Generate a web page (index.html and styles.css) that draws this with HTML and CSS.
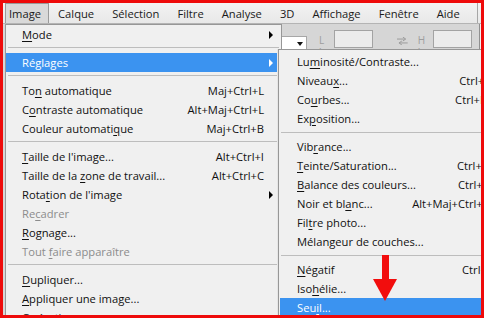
FILE: index.html
```html
<!DOCTYPE html>
<html lang="fr">
<head>
    <meta charset="UTF-8">
    <title>Image - Réglages</title>
    <link rel="stylesheet" href="styles.css">
</head>
<body>
<div class="frame">
    <div class="menubar">
        <span class="menubar-item active">Image</span>
        <span class="menubar-item">Calque</span>
        <span class="menubar-item">Sélection</span>
        <span class="menubar-item">Filtre</span>
        <span class="menubar-item">Analyse</span>
        <span class="menubar-item">3D</span>
        <span class="menubar-item">Affichage</span>
        <span class="menubar-item">Fenêtre</span>
        <span class="menubar-item">Aide</span>
        <span class="menubar-sep"></span>
    </div>

    <div class="toolbar">
        <span class="tb-select"><span class="tb-caret"></span></span>
        <span class="tb-label">L :</span>
        <span class="tb-input"></span>
        <svg class="tb-swap" width="11" height="8" viewBox="0 0 11 8">
            <path d="M0 2h8M6 0l3 2-3 2M11 6H3M5 4L2 6l3 2" fill="none" stroke="#9a9a9a" stroke-width="1"/>
        </svg>
        <span class="tb-label tb-label-h">H :</span>
        <span class="tb-input tb-input-h"></span>
        <span class="tb-vline"></span>
    </div>

    <div class="menu main-menu">
        <div class="row"><span class="label"><u>M</u>ode</span><span class="sub-arrow"></span></div>
        <div class="sep"></div>
        <div class="row hover"><span class="label">Réglages</span><span class="sub-arrow"></span></div>
        <div class="sep"></div>
        <div class="row"><span class="label">To<u>n</u> automatique</span><span class="key">Maj+Ctrl+L</span><span class="no-arrow"></span></div>
        <div class="row"><span class="label">C<u>o</u>ntraste automatique</span><span class="key">Alt+Maj+Ctrl+L</span><span class="no-arrow"></span></div>
        <div class="row"><span class="label">Couleur automati<u>q</u>ue</span><span class="key">Maj+Ctrl+B</span><span class="no-arrow"></span></div>
        <div class="sep"></div>
        <div class="row"><span class="label"><u>T</u>aille de l'image...</span><span class="key">Alt+Ctrl+I</span><span class="no-arrow"></span></div>
        <div class="row"><span class="label">Taille de la <u>z</u>one de travail...</span><span class="key">Alt+Ctrl+C</span><span class="no-arrow"></span></div>
        <div class="row"><span class="label">Rota<u>t</u>ion de l'image</span><span class="sub-arrow"></span></div>
        <div class="row disabled"><span class="label">Re<u>c</u>adrer</span></div>
        <div class="row"><span class="label"><u>R</u>ognage...</span></div>
        <div class="row disabled"><span class="label">Tout <u>f</u>aire apparaître</span></div>
        <div class="sep"></div>
        <div class="row"><span class="label"><u>D</u>upliquer...</span></div>
        <div class="row"><span class="label"><u>A</u>ppliquer une image...</span></div>
        <div class="row"><span class="label">O<u>p</u>érations...</span></div>
    </div>

    <div class="menu sub-menu">
        <div class="row"><span class="label">Lu<u>m</u>inosité/Contraste...</span></div>
        <div class="row"><span class="label">Niveau<u>x</u>...</span><span class="key">Ctrl+L</span></div>
        <div class="row"><span class="label">Co<u>u</u>rbes...</span><span class="key">Ctrl+M</span></div>
        <div class="row"><span class="label">Ex<u>p</u>osition...</span></div>
        <div class="sep"></div>
        <div class="row"><span class="label">Vib<u>r</u>ance...</span></div>
        <div class="row"><span class="label"><u>T</u>einte/Saturation...</span><span class="key">Ctrl+U</span></div>
        <div class="row"><span class="label"><u>B</u>alance des couleurs...</span><span class="key">Ctrl+B</span></div>
        <div class="row"><span class="label">Noir et bl<u>a</u>nc...</span><span class="key">Alt+Maj+Ctrl+B</span></div>
        <div class="row"><span class="label">Fil<u>t</u>re photo...</span></div>
        <div class="row"><span class="label">Mélangeur de couches...</span></div>
        <div class="sep"></div>
        <div class="row"><span class="label"><u>N</u>égatif</span><span class="key">Ctrl+I</span></div>
        <div class="row"><span class="label">Iso<u>h</u>élie...</span></div>
        <div class="row hover"><span class="label">Seu<u>i</u>l...</span></div>
    </div>

    <!-- annotation arrow drawn over the screenshot -->
    <svg class="red-arrow" width="24" height="48" viewBox="0 0 24 48">
        <rect x="9" y="0" width="7" height="26" fill="#f20d0d"/>
        <polygon points="0,24 24,24 12,46" fill="#f20d0d"/>
    </svg>
</div>
</body>
</html>
```

FILE: styles.css
```css
body {
    margin: 0;
    font-family: "Open Sans", "Noto Sans", sans-serif;
    font-size: 11.2px;
}
.frame {
    position: relative;
    box-sizing: border-box;
    width: 484px;
    height: 318px;
    border: 3px solid #ee0a0a;
    background-color: #d6d6d6;
    overflow: hidden;
}
.menubar {
    display: flex;
    align-items: stretch;
    height: 20px;
    padding-left: 2px;
    background: linear-gradient(#f3f3f3, #e8e8e8);
    border-bottom: 1px solid #b4b4b4;
    color: #1a1a1a;
}
.menubar-item {
    padding: 0 8px;
    line-height: 19px;
    border: 1px solid transparent;
    border-bottom: none;
}
.menubar-item.active {
    padding: 0 7px 0 3px;
    background-color: #d9d9d9;
    border-color: #9a9a9a;
}
.menubar-sep {
    margin-left: 8px;
    width: 1px;
    background-color: #a6a6a6;
}
.toolbar {
    display: flex;
    align-items: flex-start;
    height: 30px;
    padding-left: 265px;
    background-color: #d6d6d6;
    color: #9d9d9d;
    font-size: 10px;
    line-height: 10px;
}
.tb-select {
    display: flex;
    justify-content: flex-end;
    width: 38px;
    height: 14px;
    margin-top: 12px;
    background-color: #ffffff;
    border: 1px solid #a7a7a7;
}
.tb-caret {
    margin: 5px 3px 0 0;
    border-left: 3px solid transparent;
    border-right: 3px solid transparent;
    border-top: 4px solid #111111;
}
.tb-label {
    margin: 11px 0 0 12px;
}
.tb-input {
    width: 38px;
    height: 16px;
    margin: 6px 0 0 5px;
    background-color: #ececec;
    border: 1px solid #a3a3a3;
}
.tb-swap {
    margin: 13px 0 0 24px;
}
.tb-label-h {
    margin-left: 10px;
}
.tb-input-h {
    margin-left: 3px;
}
.tb-vline {
    width: 1px;
    height: 30px;
    margin-left: 7px;
    background-color: #8f8f8f;
    border-right: 1px solid #f2f2f2;
}
.menu {
    position: absolute;
    box-sizing: border-box;
    background-color: #f0f0f0;
    border: 1px solid #979797;
    color: #111111;
}
.main-menu {
    left: 2px;
    top: 21px;
    width: 277px;
    height: 320px;
}
.sub-menu {
    left: 275px;
    top: 46px;
    width: 240px;
    height: 290px;
    padding-top: 2px;
    box-shadow: -1px 0 0 #e6e6e6;
}
.row {
    display: flex;
    height: 19px;
    line-height: 19px;
    padding: 0 4px 0 16px;
    white-space: nowrap;
}
.sub-menu .row {
    margin: 0 1px;
    padding: 0 26px 0 17px;
}
.row .label {
    flex: 1;
}
.row u {
    text-decoration-thickness: 1px;
    text-underline-offset: 2px;
}
.row.disabled {
    color: #8c8c8c;
}
.row.hover {
    background-color: #3b93f0;
    color: #ffffff;
}
.sub-arrow,
.no-arrow {
    display: flex;
    align-items: center;
    justify-content: center;
    width: 13px;
}
.sub-arrow::before {
    content: "";
    border-top: 4px solid transparent;
    border-bottom: 4px solid transparent;
    border-left: 4px solid #000000;
}
.row.hover .sub-arrow::before {
    border-left-color: #ffffff;
}
.sep {
    height: 1px;
    margin: 4px 2px 4px 2px;
    background-color: #bdbdbd;
}
.main-menu .sep {
    margin-top: 3px;
    margin-bottom: 5px;
}
.red-arrow {
    position: absolute;
    left: 370px;
    top: 252px;
}
```
